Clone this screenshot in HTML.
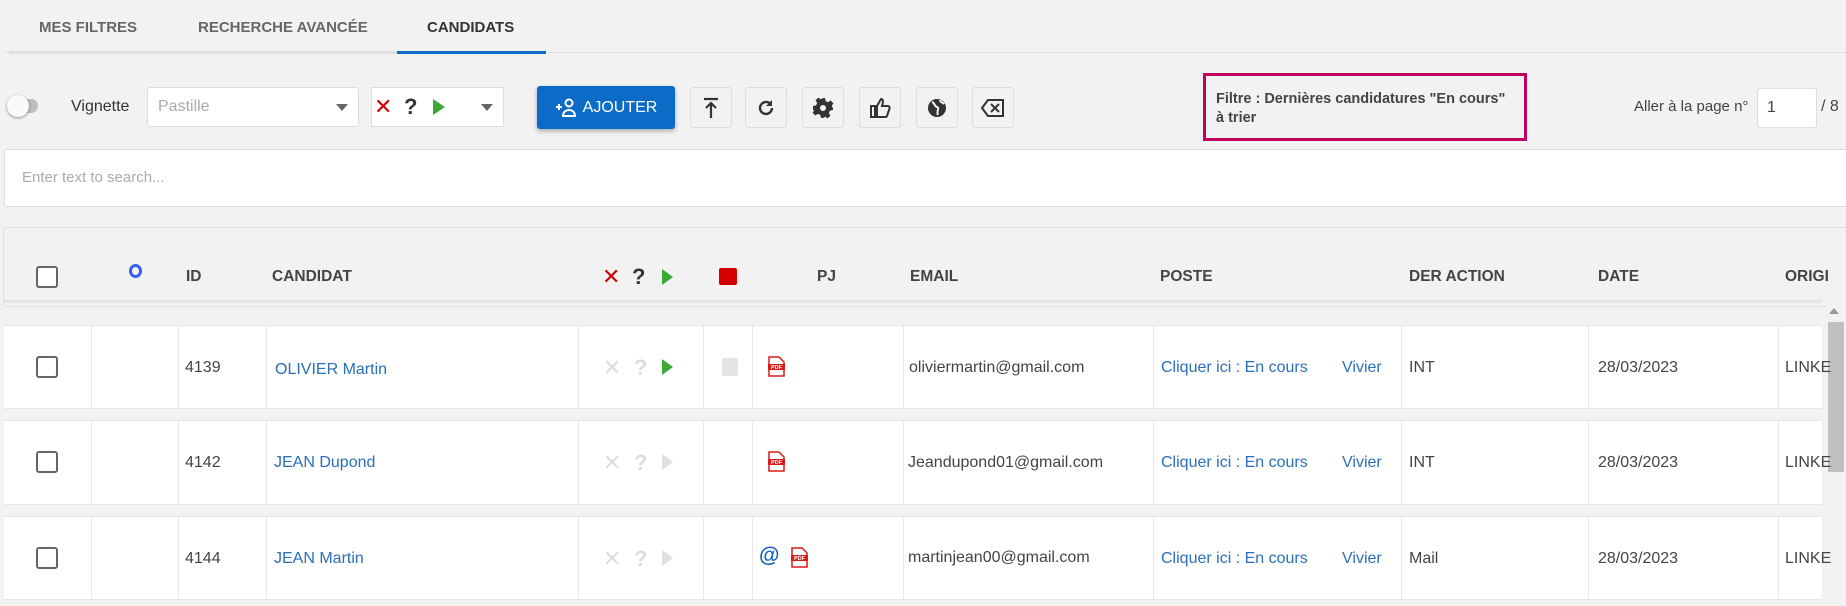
<!DOCTYPE html>
<html><head><meta charset="utf-8"><style>
*{box-sizing:border-box;margin:0;padding:0}
body{width:1846px;height:606px;overflow:hidden;background:#f2f2f2;font-family:"Liberation Sans",Arial,sans-serif;position:relative;color:#444}
.a{position:absolute}
.tab{position:absolute;top:19px;font-size:15px;font-weight:bold;color:#666}
.btn{position:absolute;top:87px;width:42px;height:41px;border:1px solid #ddd;border-radius:3px;background:#f2f2f2;display:flex;align-items:center;justify-content:center}
.row{position:absolute;left:4px;width:1818px;background:#fff;border-top:1px solid #e6e6e6;border-bottom:1px solid #e6e6e6}
.vl{position:absolute;top:0;bottom:0;width:1px;background:#e8e8e8}
.t{position:absolute;font-size:16px;color:#444;white-space:nowrap}
.bl{color:#2a6ebb}
.h{position:absolute;top:268px;font-size:15.5px;font-weight:bold;color:#444}
.cb{position:absolute;width:22px;height:22px;border:2px solid #666;border-radius:3px;background:#fff}
.pdf{position:absolute;width:17px;height:21px}
</style></head><body>
<div class="tab" style="left:39px">MES FILTRES</div>
<div class="tab" style="left:198px">RECHERCHE AVANCÉE</div>
<div class="tab" style="left:427px;color:#333">CANDIDATS</div>
<div class="a" style="left:4px;top:52px;width:1842px;height:1px;background:#e2e2e2"></div>
<div class="a" style="left:9px;top:51px;width:388px;height:3px;background:#e0e0e0"></div>
<div class="a" style="left:397px;top:51px;width:149px;height:3px;background:#0b6bc6"></div>

<div class="a" style="left:12px;top:99px;width:26px;height:14px;border-radius:7px;background:#bdbdbd"></div>
<div class="a" style="left:7px;top:95px;width:22px;height:22px;border-radius:50%;background:#fafafa;box-shadow:0 1px 3px rgba(0,0,0,.4)"></div>
<div class="t" style="left:71px;top:98px;font-size:16px;color:#333">Vignette</div>
<div class="a" style="left:147px;top:87px;width:212px;height:40px;background:#fff;border:1px solid #ddd;border-radius:3px"></div>
<div class="t" style="left:158px;top:98px;color:#aaa">Pastille</div>
<div class="a" style="left:336px;top:104px;border:6px solid transparent;border-top:7px solid #666"></div>
<div class="a" style="left:371px;top:87px;width:133px;height:40px;background:#fff;border:1px solid #ddd"></div>
<div class="t" style="left:374px;top:94px;font-size:22px;color:#d40000">✕</div>
<div class="t" style="left:404px;top:94px;font-size:22px;font-weight:bold;color:#333">?</div>
<div class="a" style="left:433px;top:99px;border:8px solid transparent;border-left:12px solid #3aaa35;border-right:0"></div>
<div class="a" style="left:481px;top:104px;border:6px solid transparent;border-top:7px solid #666"></div>

<div class="a" style="left:537px;top:86px;width:138px;height:43px;background:#0b6bc6;border-radius:3px;box-shadow:0 2px 5px rgba(0,0,0,.3);color:#fff;font-size:16px;display:flex;align-items:center;justify-content:center">
<svg width="24" height="20" viewBox="0 0 24 20" style="margin-right:4px"><path d="M1 9h6M4 6v6" stroke="#fff" stroke-width="2"/><circle cx="14" cy="5" r="3.5" fill="none" stroke="#fff" stroke-width="2"/><path d="M8 18c0-4 3-6 6-6s6 2 6 6z" fill="none" stroke="#fff" stroke-width="2"/></svg>AJOUTER</div>

<div class="btn" style="left:690px"><svg width="18" height="22"><path d="M2 2h14M9 21V6M4 11l5-5 5 5" stroke="#333" stroke-width="2.2" fill="none"/></svg></div>
<div class="btn" style="left:745px"><svg width="20" height="20"><path d="M16 10a6 6 0 1 1-2-4.5" stroke="#333" stroke-width="2.4" fill="none"/><path d="M16 2v6h-6z" fill="#333"/></svg></div>
<div class="btn" style="left:802px"><svg width="22" height="22" viewBox="0 0 22 22"><path d="M9 1h4l.6 3 2.4 1.2 2.6-1.7 2.8 2.8-1.7 2.6L21 11.4v0l-.2 0 .2 0 0 -.4V13l-3 .6-1.2 2.4 1.7 2.6-2.8 2.8-2.6-1.7L11 21l-2-0-.6-3-2.4-1.2-2.6 1.7-2.8-2.8 1.7-2.6L1 13V9l3-.6 1.2-2.4-1.7-2.6 2.8-2.8 2.6 1.7L11 1z" fill="#333"/><circle cx="11" cy="11" r="3" fill="#f2f2f2"/></svg></div>
<div class="btn" style="left:859px"><svg width="22" height="22"><path d="M2 9h4v11H2zM8 9l4-7c2 0 2 2 2 3l-1 4h6c1 0 2 1 1.5 2.5L18 19c-.3.8-1 1-2 1H8z" fill="none" stroke="#333" stroke-width="2"/></svg></div>
<div class="btn" style="left:916px"><svg width="22" height="22"><circle cx="11" cy="11" r="9" fill="#333"/><path d="M6 5c3 1 2 4 5 5s-1 5 1 8M14 3c0 2 2 2 4 4" stroke="#f2f2f2" stroke-width="2" fill="none"/></svg></div>
<div class="btn" style="left:972px"><svg width="24" height="20"><path d="M7 2h15v16H7L1 10z" fill="none" stroke="#333" stroke-width="2"/><path d="M10 6l8 8M18 6l-8 8" stroke="#333" stroke-width="2"/></svg></div>

<div class="a" style="left:1203px;top:73px;width:324px;height:68px;border:3px solid #c20060"></div>
<div class="t" style="left:1216px;top:90px;font-size:14.5px;font-weight:bold;color:#444;line-height:19px">Filtre : Dernières candidatures "En cours"<br>à trier</div>
<div class="t" style="left:1634px;top:98px;font-size:15px">Aller à la page n°</div>
<div class="a" style="left:1757px;top:88px;width:60px;height:40px;background:#fff;border:1px solid #ddd;border-radius:3px"></div>
<div class="t" style="left:1767px;top:99px">1</div>
<div class="t" style="left:1821px;top:98px">/ 8</div>

<div class="a" style="left:4px;top:149px;width:1850px;height:58px;background:#fff;border:1px solid #ddd;border-radius:3px"></div>
<div class="t" style="left:22px;top:169px;font-size:15px;color:#aaa">Enter text to search...</div>

<div class="a" style="left:3px;top:227px;width:1850px;height:80px;border:1px solid #e0e0e0;border-radius:3px;background:#f2f2f2"></div>
<div class="a" style="left:4px;top:300px;width:1818px;height:4px;background:linear-gradient(#ddd,#f2f2f2)"></div>
<div class="cb" style="left:36px;top:266px"></div>
<div class="a" style="left:129px;top:264px;width:13px;height:14px;border:3px solid #3b5df5;border-radius:50%"></div>
<div class="h" style="left:186px">ID</div>
<div class="h" style="left:272px">CANDIDAT</div>
<div class="t" style="left:602px;top:264px;font-size:22px;color:#d40000">✕</div>
<div class="t" style="left:632px;top:264px;font-size:22px;font-weight:bold;color:#333">?</div>
<div class="a" style="left:662px;top:269px;border:8px solid transparent;border-left:11px solid #3aaa35;border-right:0"></div>
<div class="a" style="left:719px;top:268px;width:18px;height:17px;background:#d40000;border-radius:2px"></div>
<div class="h" style="left:817px">PJ</div>
<div class="h" style="left:910px">EMAIL</div>
<div class="h" style="left:1160px">POSTE</div>
<div class="h" style="left:1409px">DER ACTION</div>
<div class="h" style="left:1598px">DATE</div>
<div class="h" style="left:1785px">ORIGI</div>

<div class="a" style="left:1826px;top:303px;width:20px;height:303px;background:#f2f2f2"></div>
<div class="a" style="left:1829px;top:308px;border:5px solid transparent;border-bottom:6px solid #999;border-top:0"></div>
<div class="a" style="left:1828px;top:322px;width:16px;height:150px;background:#c1c1c1"></div>

<div class="row" style="top:325px;height:84px">
<div class="vl" style="left:87px"></div><div class="vl" style="left:174px"></div><div class="vl" style="left:262px"></div><div class="vl" style="left:574px"></div><div class="vl" style="left:699px"></div><div class="vl" style="left:748px"></div><div class="vl" style="left:899px"></div><div class="vl" style="left:1149px"></div><div class="vl" style="left:1397px"></div><div class="vl" style="left:1584px"></div><div class="vl" style="left:1774px"></div>
</div>
<div class="row" style="top:420px;height:85px">
<div class="vl" style="left:87px"></div><div class="vl" style="left:174px"></div><div class="vl" style="left:262px"></div><div class="vl" style="left:574px"></div><div class="vl" style="left:699px"></div><div class="vl" style="left:748px"></div><div class="vl" style="left:899px"></div><div class="vl" style="left:1149px"></div><div class="vl" style="left:1397px"></div><div class="vl" style="left:1584px"></div><div class="vl" style="left:1774px"></div>
</div>
<div class="row" style="top:516px;height:84px">
<div class="vl" style="left:87px"></div><div class="vl" style="left:174px"></div><div class="vl" style="left:262px"></div><div class="vl" style="left:574px"></div><div class="vl" style="left:699px"></div><div class="vl" style="left:748px"></div><div class="vl" style="left:899px"></div><div class="vl" style="left:1149px"></div><div class="vl" style="left:1397px"></div><div class="vl" style="left:1584px"></div><div class="vl" style="left:1774px"></div>
</div>

<!-- row1 -->
<div class="cb" style="left:36px;top:356px"></div>
<div class="t" style="left:185px;top:359px">4139</div>
<div class="t bl" style="left:275px;top:361px">OLIVIER Martin</div>
<div class="t" style="left:603px;top:355px;font-size:22px;color:#ddd">✕</div>
<div class="t" style="left:634px;top:355px;font-size:22px;color:#ddd;font-weight:bold">?</div>
<div class="a" style="left:662px;top:359px;border:8px solid transparent;border-left:11px solid #3aaa35;border-right:0"></div>
<div class="a" style="left:722px;top:358px;width:16px;height:18px;background:#e4e4e4;border-radius:2px"></div>
<svg class="pdf" style="left:768px;top:356px" viewBox="0 0 17 21"><path d="M1 1h10l5 5v14H1z" fill="#fff" stroke="#d81b1b" stroke-width="1.5"/><rect x="0" y="8" width="17" height="6" fill="#d81b1b"/><text x="8.5" y="13" font-size="5.5" fill="#fff" text-anchor="middle" font-family="Liberation Sans" font-weight="bold">PDF</text></svg>
<div class="t" style="left:909px;top:359px">oliviermartin@gmail.com</div>
<div class="t bl" style="left:1161px;top:359px">Cliquer ici : En cours</div>
<div class="t bl" style="left:1342px;top:359px">Vivier</div>
<div class="t" style="left:1409px;top:359px">INT</div>
<div class="t" style="left:1598px;top:359px">28/03/2023</div>
<div class="t" style="left:1785px;top:359px">LINKE</div>

<!-- row2 -->
<div class="cb" style="left:36px;top:451px"></div>
<div class="t" style="left:185px;top:454px">4142</div>
<div class="t bl" style="left:274px;top:454px">JEAN Dupond</div>
<div class="t" style="left:603px;top:450px;font-size:22px;color:#ddd">✕</div>
<div class="t" style="left:634px;top:450px;font-size:22px;color:#ddd;font-weight:bold">?</div>
<div class="a" style="left:662px;top:454px;border:8px solid transparent;border-left:11px solid #e0e0e0;border-right:0"></div>
<svg class="pdf" style="left:768px;top:451px" viewBox="0 0 17 21"><path d="M1 1h10l5 5v14H1z" fill="#fff" stroke="#d81b1b" stroke-width="1.5"/><rect x="0" y="8" width="17" height="6" fill="#d81b1b"/><text x="8.5" y="13" font-size="5.5" fill="#fff" text-anchor="middle" font-family="Liberation Sans" font-weight="bold">PDF</text></svg>
<div class="t" style="left:908px;top:454px">Jeandupond01@gmail.com</div>
<div class="t bl" style="left:1161px;top:454px">Cliquer ici : En cours</div>
<div class="t bl" style="left:1342px;top:454px">Vivier</div>
<div class="t" style="left:1409px;top:454px">INT</div>
<div class="t" style="left:1598px;top:454px">28/03/2023</div>
<div class="t" style="left:1785px;top:454px">LINKE</div>

<!-- row3 -->
<div class="cb" style="left:36px;top:547px"></div>
<div class="t" style="left:185px;top:550px">4144</div>
<div class="t bl" style="left:274px;top:550px">JEAN Martin</div>
<div class="t" style="left:603px;top:546px;font-size:22px;color:#ddd">✕</div>
<div class="t" style="left:634px;top:546px;font-size:22px;color:#ddd;font-weight:bold">?</div>
<div class="a" style="left:662px;top:550px;border:8px solid transparent;border-left:11px solid #e0e0e0;border-right:0"></div>
<div class="t" style="left:759px;top:544px;font-size:21px;font-weight:bold;color:#1565c0">@</div>
<svg class="pdf" style="left:791px;top:547px" viewBox="0 0 17 21"><path d="M1 1h10l5 5v14H1z" fill="#fff" stroke="#d81b1b" stroke-width="1.5"/><rect x="0" y="8" width="17" height="6" fill="#d81b1b"/><text x="8.5" y="13" font-size="5.5" fill="#fff" text-anchor="middle" font-family="Liberation Sans" font-weight="bold">PDF</text></svg>
<div class="t" style="left:908px;top:549px">martinjean00@gmail.com</div>
<div class="t bl" style="left:1161px;top:550px">Cliquer ici : En cours</div>
<div class="t bl" style="left:1342px;top:550px">Vivier</div>
<div class="t" style="left:1409px;top:550px">Mail</div>
<div class="t" style="left:1598px;top:550px">28/03/2023</div>
<div class="t" style="left:1785px;top:550px">LINKE</div>
</body></html>
